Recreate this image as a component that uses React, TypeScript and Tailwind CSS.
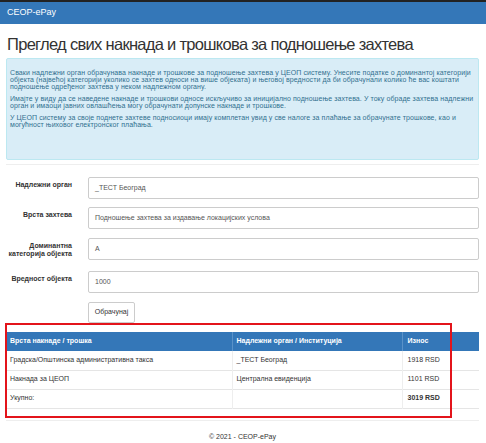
import React from "react";

const infoParas: string[][] = [
  [
    "Сваки надлежни орган обрачунава накнаде и трошкове за подношење захтева у ЦЕОП систему. Унесите податке о доминантој категорији",
    "објекта (највећој категорији уколико се захтев односи на више објеката) и његовој вредности да би обрачунали колико ће вас коштати",
    "подношење одређеног захтева у неком надлежном органу.",
  ],
  [
    "Имајте у виду да се наведене накнаде и трошкови односе искључиво за иницијално подношење захтева. У току обраде захтева надлежни",
    "орган и имаоци јавних овлашћења могу обрачунати допунске накнаде и трошкове.",
  ],
  [
    "У ЦЕОП систему за своје поднете захтеве подносиоци имају комплетан увид у све налоге за плаћање за обрачунате трошкове, као и",
    "могућност њиховог електронског плаћања.",
  ],
];

function Row({ label, value, className }: { label: React.ReactNode; value: string; className?: string }) {
  return (
    <div className={"flex gap-[16px] " + (className ?? "")}>
      <div className="w-[66px] shrink-0 pt-[4px] text-right text-[7px] leading-[8px] font-bold text-[#333]">{label}</div>
      <div className="flex h-[22px] flex-1 items-center rounded-[2px] border border-[#ccc] bg-white px-[6px] text-[7px] text-[#555]">
        {value}
      </div>
    </div>
  );
}

export default function App() {
  return (
    <div
      className="relative h-[443px] w-[486px] overflow-hidden bg-white text-[#333]"
      style={{ fontFamily: '"Liberation Sans", Arial, sans-serif' }}
    >
      <div className="flex h-[24px] items-center border-t-2 border-[#222] bg-[#3477b8] px-[7px] text-[9px] text-white">
        CEOP-ePay
      </div>
      <div className="px-[6px] pr-[7px]">
        <h2 className="mt-[9px] mb-[3px] whitespace-nowrap pl-[1px] text-[16.5px] leading-[22px] font-normal tracking-[-0.7px] text-[#333]">
          Преглед свих накнада и трошкова за подношење захтева
        </h2>
        <div className="rounded-[2px] border border-[#bce8f1] bg-[#d9edf7] pl-[3px] pr-[4px] pt-[10px] pb-[26px] text-[7px] leading-[7px] tracking-[0.08px] text-[#31708f]">
          {infoParas.map((p, i) => (
            <p key={i} className="mb-[5px]">
              {p.map((l, j) => (
                <span key={j} className="block whitespace-nowrap">
                  {l}
                </span>
              ))}
            </p>
          ))}
        </div>
        <div className="mt-[4px] border-t border-[#eee]" />
        <div className="mt-[12px]">
          <Row label="Надлежни орган" value="_ТЕСТ Београд" className="mb-[8px]" />
          <Row label="Врста захтева" value="Подношење захтева за издавање локацијских услова" className="mb-[9px]" />
          <Row
            label={
              <>
                Доминантна
                <br />
                категорија објекта
              </>
            }
            value="A"
            className="mb-[11px]"
          />
          <Row label="Вредност објекта" value="1000" />
          <div className="mt-[9px] flex pl-[82px]">
            <button className="h-[21px] w-[47px] rounded-[2px] border border-[#ccc] bg-white text-[7px] text-[#333]">
              Обрачунај
            </button>
          </div>
        </div>
        <div className="relative mt-[9px]">
          <div className="absolute left-[-1px] top-[-9px] h-[95px] w-[447px] border-2 border-[#e3141b]" />
          <table className="w-full border-collapse text-[7px]">
            <thead>
              <tr className="h-[19px] bg-[#3477b8] text-left text-white">
                <th className="w-[226px] border-r border-[#5a92c8] pl-[4px] font-bold">Врста накнаде / трошка</th>
                <th className="w-[170px] border-r border-[#5a92c8] pl-[4px] font-bold">Надлежни орган / Институција</th>
                <th className="pl-[5px] font-bold">Износ</th>
              </tr>
            </thead>
            <tbody>
              <tr className="h-[19px] border-b border-[#e5e5e5]">
                <td className="border-r border-[#eee] pl-[4px]">Градска/Општинска административна такса</td>
                <td className="border-r border-[#eee] pl-[4px]">_ТЕСТ Београд</td>
                <td className="pl-[5px]">1918 RSD</td>
              </tr>
              <tr className="h-[19px] border-b border-[#e5e5e5]">
                <td className="border-r border-[#eee] pl-[4px]">Накнада за ЦЕОП</td>
                <td className="border-r border-[#eee] pl-[4px]">Централна евиденција</td>
                <td className="pl-[5px]">1101 RSD</td>
              </tr>
              <tr className="h-[19px] border-b border-[#e5e5e5]">
                <td className="border-r border-[#eee] pl-[4px]">Укупно:</td>
                <td className="border-r border-[#eee] pl-[4px]"></td>
                <td className="pl-[5px] font-bold">3019 RSD</td>
              </tr>
            </tbody>
          </table>
        </div>
        <div className="mt-[11px] border-t border-[#eee]" />
        <div className="mt-[12px] text-center text-[7px] leading-[8px] text-[#333]">© 2021 - CEOP-ePay</div>
      </div>
    </div>
  );
}
